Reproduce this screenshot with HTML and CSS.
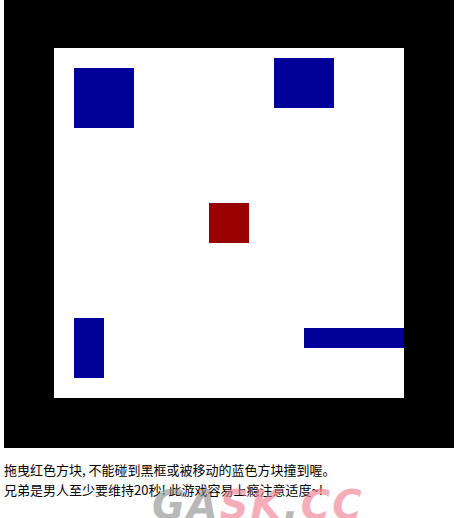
FILE: index.html
```html
<!DOCTYPE html>
<html lang="zh">
<head>
<meta charset="utf-8">
<title>躲避方块</title>
<link rel="stylesheet" href="styles.css">
</head>
<body>
<div class="page">
  <div class="game">
    <div class="field">
      <div class="enemy e1"></div>
      <div class="enemy e2"></div>
      <div class="enemy e3"></div>
      <div class="enemy e4"></div>
      <div class="player"></div>
    </div>
  </div>
  <p class="info">拖曳红色方块, 不能碰到黑框或被移动的蓝色方块撞到喔。<br>兄弟是男人至少要维持20秒! 此游戏容易上瘾注意适度~!</p>
  <div class="watermark"><span class="g">GA</span><span class="p">SK</span><span class="g">.</span><span class="p">CC</span></div>
</div>
</body>
</html>
```

FILE: styles.css
```css
html, body {
  margin: 0;
  padding: 0;
  background: #ffffff;
}
.page {
  position: relative;
  padding-left: 4px;
  height: 518px;
  overflow: hidden;
  font-family: "Noto Sans CJK SC", "Noto Sans", sans-serif;
}
.game {
  width: 450px;
  height: 450px;
  margin-top: -2px;
  background: #000000;
  padding: 50px;
  box-sizing: border-box;
}
.field {
  position: relative;
  width: 350px;
  height: 350px;
  background: #ffffff;
}
.enemy {
  position: absolute;
  background: #000099;
}
.e1 { left: 20px; top: 20px; width: 60px; height: 60px; }
.e2 { left: 220px; top: 10px; width: 60px; height: 50px; }
.e3 { left: 20px; top: 270px; width: 30px; height: 60px; }
.e4 { left: 250px; top: 280px; width: 100px; height: 20px; }
.player {
  position: absolute;
  left: 155px;
  top: 155px;
  width: 40px;
  height: 40px;
  background: #990000;
}
.info {
  margin: 12px 0 0 0;
  font-size: 13px;
  line-height: 20px;
  color: #000000;
}
.watermark {
  position: absolute;
  left: 152px;
  top: 482px;
  font-family: "DejaVu Sans", sans-serif;
  font-weight: bold;
  font-style: italic;
  font-size: 40px;
  letter-spacing: 2px;
  opacity: 0.6;
  pointer-events: none;
}
.watermark .g { color: #8a8a8a; }
.watermark .p { color: #f07a8c; }
```
